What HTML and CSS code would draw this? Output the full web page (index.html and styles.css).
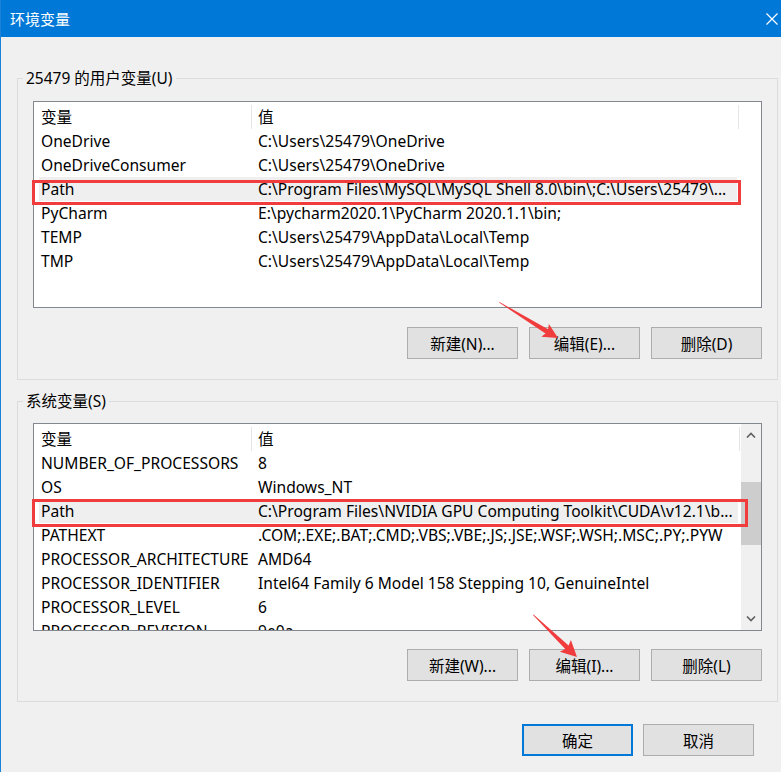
FILE: index.html
```html
<!DOCTYPE html>
<html lang="zh-CN">
<head>
    <meta charset="UTF-8">
    <meta name="viewport" content="width=device-width, initial-scale=1.0">
    <title>环境变量</title>
    <link rel="stylesheet" href="styles.css">
</head>
<body>

    <div class="window">
        <!-- Title bar -->
        <div class="titlebar">
            <span class="title">环境变量</span>
            <svg class="close" width="12" height="12" viewBox="0 0 12 12">
                <path d="M0.5 0.5 L11.5 11.5 M11.5 0.5 L0.5 11.5" stroke="#fff" stroke-width="1.2" fill="none"/>
            </svg>
        </div>

        <div class="dialog-body">
            <!-- User variables -->
            <fieldset class="group">
                <legend>25479 的用户变量(U)</legend>
                <div class="list">
                    <div class="list-main">
                        <div class="list-head">
                            <div class="cell name">变量</div>
                            <div class="cell value">值</div>
                        </div>
                        <div class="row"><div class="cell name">OneDrive</div><div class="cell value">C:\Users\25479\OneDrive</div></div>
                        <div class="row"><div class="cell name">OneDriveConsumer</div><div class="cell value">C:\Users\25479\OneDrive</div></div>
                        <div class="row selected"><div class="cell name">Path</div><div class="cell value">C:\Program Files\MySQL\MySQL Shell 8.0\bin\;C:\Users\25479\...</div></div>
                        <div class="row"><div class="cell name">PyCharm</div><div class="cell value">E:\pycharm2020.1\PyCharm 2020.1.1\bin;</div></div>
                        <div class="row"><div class="cell name">TEMP</div><div class="cell value">C:\Users\25479\AppData\Local\Temp</div></div>
                        <div class="row"><div class="cell name">TMP</div><div class="cell value">C:\Users\25479\AppData\Local\Temp</div></div>
                    </div>
                </div>
                <div class="btn-row">
                    <button class="btn">新建(N)...</button>
                    <button class="btn">编辑(E)...</button>
                    <button class="btn">删除(D)</button>
                </div>
            </fieldset>

            <!-- System variables -->
            <fieldset class="group system">
                <legend>系统变量(S)</legend>
                <div class="list">
                    <div class="list-main">
                        <div class="list-head">
                            <div class="cell name">变量</div>
                            <div class="cell value">值</div>
                        </div>
                        <div class="row"><div class="cell name">NUMBER_OF_PROCESSORS</div><div class="cell value">8</div></div>
                        <div class="row"><div class="cell name">OS</div><div class="cell value">Windows_NT</div></div>
                        <div class="row selected"><div class="cell name">Path</div><div class="cell value">C:\Program Files\NVIDIA GPU Computing Toolkit\CUDA\v12.1\b...</div></div>
                        <div class="row"><div class="cell name">PATHEXT</div><div class="cell value">.COM;.EXE;.BAT;.CMD;.VBS;.VBE;.JS;.JSE;.WSF;.WSH;.MSC;.PY;.PYW</div></div>
                        <div class="row"><div class="cell name">PROCESSOR_ARCHITECTURE</div><div class="cell value">AMD64</div></div>
                        <div class="row"><div class="cell name">PROCESSOR_IDENTIFIER</div><div class="cell value">Intel64 Family 6 Model 158 Stepping 10, GenuineIntel</div></div>
                        <div class="row"><div class="cell name">PROCESSOR_LEVEL</div><div class="cell value">6</div></div>
                        <div class="row"><div class="cell name">PROCESSOR_REVISION</div><div class="cell value">9e0a</div></div>
                    </div>
                    <div class="scrollbar">
                        <div class="scroll-btn">
                            <svg width="10" height="6" viewBox="0 0 10 6"><path d="M1 5.5 L5 1.5 L9 5.5" stroke="#606060" stroke-width="1.6" fill="none"/></svg>
                        </div>
                        <div class="scroll-track"><div class="thumb"></div></div>
                        <div class="scroll-btn">
                            <svg width="10" height="6" viewBox="0 0 10 6"><path d="M1 0.5 L5 4.5 L9 0.5" stroke="#606060" stroke-width="1.6" fill="none"/></svg>
                        </div>
                    </div>
                </div>
                <div class="btn-row">
                    <button class="btn">新建(W)...</button>
                    <button class="btn">编辑(I)...</button>
                    <button class="btn">删除(L)</button>
                </div>
            </fieldset>

            <div class="dialog-btns">
                <button class="btn primary">确定</button>
                <button class="btn">取消</button>
            </div>
        </div>

        <!-- Red annotations drawn on top of the screenshot -->
        <svg class="marks" width="781" height="772" viewBox="0 0 781 772">
            <rect x="33.5" y="181.5" width="706" height="22" fill="none" stroke="#f03c3c" stroke-width="3"/>
            <rect x="33.5" y="500.5" width="713" height="25" fill="none" stroke="#f03c3c" stroke-width="3"/>
            <polygon points="499,302.5 545.5,333.5 541.3,336.8 558,338 548.9,323.9 548.1,329.2 499.5,302" fill="#f03c3c"/>
            <polygon points="533,615 565.2,649.1 559.9,651.7 577,657 570.9,640.1 568.6,645.5 533.5,614.5" fill="#f03c3c"/>
        </svg>
    </div>

</body>
</html>
```

FILE: styles.css
```css
* {
    margin: 0;
    padding: 0;
    box-sizing: border-box;
}
body {
    background: #f0f0f0;
    font-family: "Noto Sans", "Noto Sans CJK SC", sans-serif;
    font-size: 15px;
    color: #000;
    overflow: hidden;
}
.window {
    position: relative;
    width: 781px;
    height: 772px;
    border-left: 1px solid #1a82d8;
    background: #f0f0f0;
}
.titlebar {
    height: 37px;
    background: #0078d7;
    display: flex;
    align-items: center;
    justify-content: space-between;
    padding: 0 3px 0 9px;
}
.title {
    color: #fff;
    font-size: 15px;
    line-height: 20px;
}
.close {
    display: block;
}
.dialog-body {
    padding: 31px 3px 0 16px;
}
.group {
    border: 1px solid #dcdcdc;
    padding: 0 15px 20px;
    min-width: 0;
}
.group legend {
    margin-left: -10px;
    padding: 0 3px;
    line-height: 20px;
    font-size: 15.5px;
}
.group.system {
    margin-top: 11px;
}
.list {
    display: flex;
    height: 207px;
    margin-top: 13px;
    border: 1px solid #828790;
    background: #fff;
    overflow: hidden;
    font-size: 15.6px;
}
.system .list {
    height: 208px;
    margin-top: 12px;
}
.list-main {
    flex: 1;
    min-width: 0;
    overflow: hidden;
}
.list-head {
    display: flex;
    height: 27px;
    padding-top: 3px;
    line-height: 24px;
}
.list-head .cell {
    border-right: 1px solid #e5e5e5;
}
.row {
    display: flex;
    height: 24px;
    line-height: 24px;
}
.cell {
    white-space: nowrap;
    overflow: hidden;
}
.cell.name {
    width: 218px;
    flex-shrink: 0;
    padding-left: 7px;
}
.cell.value {
    width: 487px;
    flex-shrink: 0;
    padding-left: 6px;
}
.system .cell.value {
    width: 488px;
}
.row.selected .cell {
    background: #efefef;
}
.row.selected .cell.name {
    box-shadow: inset 5px 0 #fff;
}
.row.selected .cell.value {
    box-shadow: inset -2px 0 #fff;
}
.scrollbar {
    width: 20px;
    flex-shrink: 0;
    display: flex;
    flex-direction: column;
    background: #f0f0f0;
}
.scroll-btn {
    height: 22px;
    display: flex;
    align-items: center;
    justify-content: center;
}
.scroll-track {
    flex: 1;
    padding-top: 36px;
}
.thumb {
    height: 63px;
    background: #cdcdcd;
}
.btn-row {
    display: flex;
    justify-content: flex-end;
    gap: 11px;
    margin-top: 19px;
}
.system .btn-row {
    margin-top: 18px;
}
.btn {
    width: 111px;
    height: 32px;
    background: #e1e1e1;
    border: 1px solid #adadad;
    font-family: "Noto Sans", "Noto Sans CJK SC", sans-serif;
    font-size: 15.5px;
    color: #000;
}
.btn.primary {
    border: 2px solid #0078d7;
}
.dialog-btns {
    display: flex;
    justify-content: flex-end;
    gap: 10px;
    margin-top: 22px;
    margin-right: 24px;
}
.marks {
    position: absolute;
    top: 0;
    left: -1px;
    pointer-events: none;
}
```
